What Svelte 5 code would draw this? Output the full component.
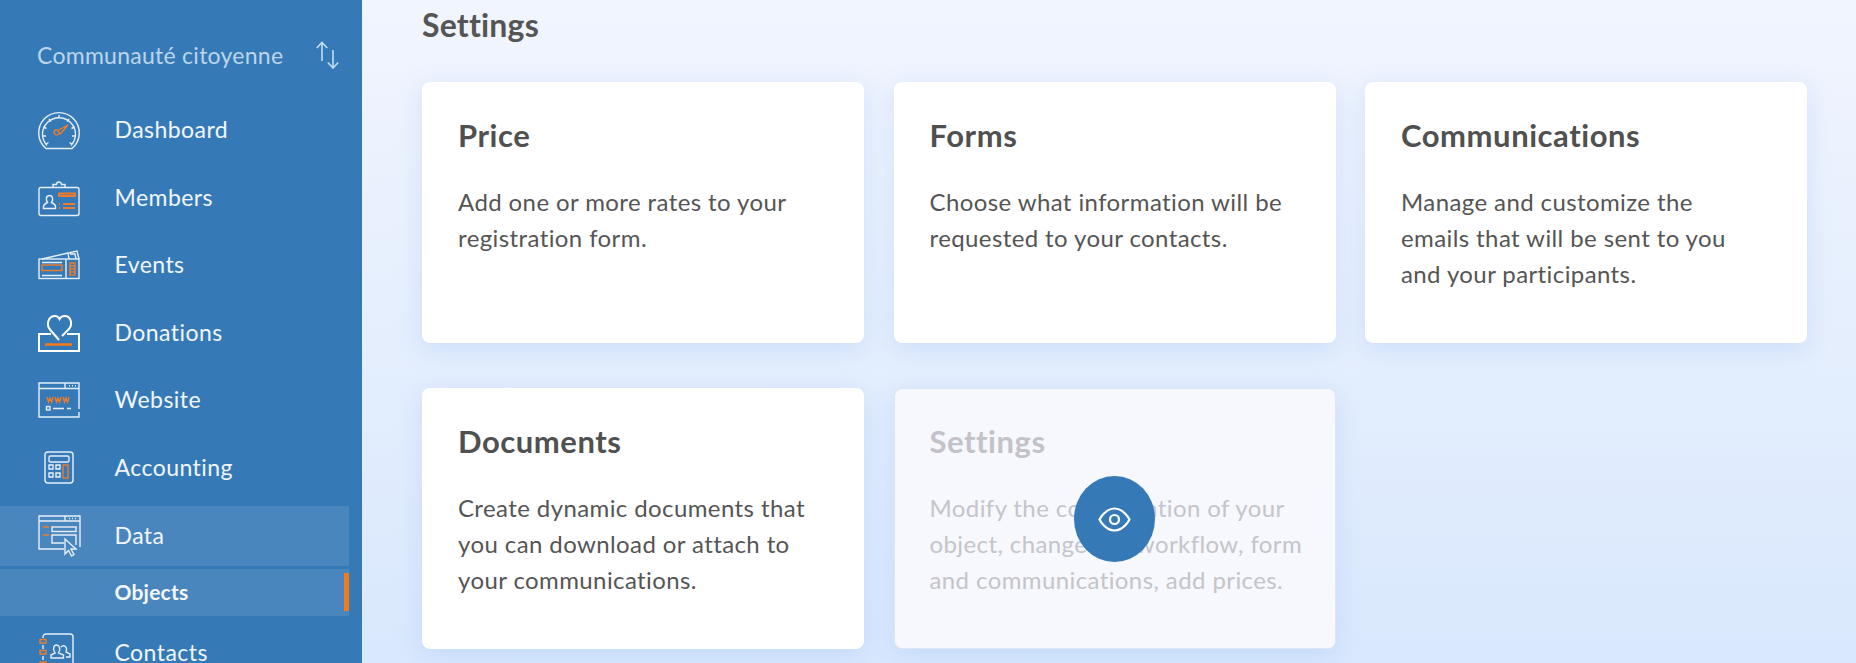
<script>
  const cards = [
    { title: 'Price', text: ['Add one or more rates to your', 'registration form.'] },
    { title: 'Forms', text: ['Choose what information will be', 'requested to your contacts.'] },
    { title: 'Communications', text: ['Manage and customize the', 'emails that will be sent to you', 'and your participants.'] },
    { title: 'Documents', text: ['Create dynamic documents that', 'you can download or attach to', 'your communications.'] },
    { title: 'Settings', text: ['Modify the configuration of your', 'object, change the workflow, form', 'and communications, add prices.'], muted: true }
  ];
</script>

<div class="page">
  <aside class="sidebar">
    <div class="org">
      <span>Communauté citoyenne</span>
      <svg class="swap" width="24" height="28" viewBox="0 0 24 28"><path d="M6 20V1.500M0.800 7 6 1.500 11.200 7M17 9v18M11.800 21.500 17 27l5.200-5.500"/></svg>
    </div>
    <nav class="menu">
      <a class="item">
        <svg class="ico" width="42" height="40" viewBox="0 0 42 40">
          <path class="w" d="M8 38.500A20.300 20.300 0 1 1 34 38.500ZM9 35.500A16.500 16.500 0 1 1 33 35.500"/>
          <path class="w" d="M21 5v3M11 9l2 2.500M31 9l-2 2.500M5.500 17l3 1.500M36.500 17l-3 1.500M4.500 26H8M37.500 26H34M8 34l2.500-1.500M34 34l-2.500-1.500"/>
          <path class="o" d="M19 21l11-6-8 9.500M21 23a2.500 2.500 0 1 1-4.500-2 2.500 2.500 0 0 1 4.500 2Z"/>
        </svg>
        <span>Dashboard</span>
      </a>
      <a class="item">
        <svg class="ico" width="42" height="36" viewBox="0 0 42 36">
          <rect class="w" x="1" y="7.500" width="40" height="28" rx="2"/>
          <path class="w" d="M15 7.500V4.500h3.500a2.500 2.500 0 0 1 5 0H27v3"/>
          <path class="w" d="M5.500 28.500v-2c0-2 2-3 4-4-2-2.500-1.500-7 2-7s4 4.500 2 7c2 1 4 2 4 4v2Z"/>
          <path class="o2" d="M21 13.500h16v2.500H21ZM21 24h1M25 24h12M21 28h1M25 28h12"/>
        </svg>
        <span>Members</span>
      </a>
      <a class="item">
        <svg class="ico" width="42" height="30" viewBox="0 0 42 30">
          <rect class="w" x="1" y="9" width="40" height="19.500"/>
          <path class="w" d="M4 9 30 3M31 9l-1-6 9-2 2 8M32 4h5l1 5M28 9v20"/>
          <path class="w" d="M4 12.500h20M4 25.500h20"/>
          <rect class="o" x="4" y="15" width="20" height="5.500"/>
          <rect class="o" x="32" y="13" width="5" height="12"/>
          <path class="o" d="M32 16h5M32 19h5M32 22h5"/>
        </svg>
        <span>Events</span>
      </a>
      <a class="item">
        <svg class="ico" width="42" height="38" viewBox="0 0 42 38">
          <path class="b" d="M13 20H1v17h40V20H29"/>
          <path class="b" d="M21 26 12 15.500C8 11 10 2 17 2c2 0 3.500 1 4.500 3 1-2 3-3 5-3 7 0 8.500 9 4 13.500L24 22"/>
          <path class="ob" d="M7 30.500h27"/>
        </svg>
        <span>Donations</span>
      </a>
      <a class="item">
        <svg class="ico" width="42" height="36" viewBox="0 0 42 36">
          <path class="w" d="M41 30v5H1V1h40v26M1 6.500h40M27 1v5.500M31 3.800h1M34 3.800h1M37 3.800h1"/>
          <path class="o" d="M9 15l1.500 5 1.500-4 1.500 4 1.500-5M17 15l1.500 5 1.500-4 1.500 4 1.500-5M25 15l1.500 5 1.500-4 1.500 4 1.500-5"/>
          <rect class="w" x="8.500" y="24.500" width="3.500" height="3.500"/>
          <path class="w" d="M15 26.500h11M29 26.500h4"/>
        </svg>
        <span>Website</span>
      </a>
      <a class="item">
        <svg class="ico" width="42" height="34" viewBox="0 0 42 34">
          <rect class="w" x="7" y="1" width="28" height="31" rx="3"/>
          <rect class="w" x="11" y="5" width="20" height="6" rx="1.500"/>
          <path class="w" d="M11 14h4v4h-4ZM18 14h4v4h-4ZM11 22h4v4h-4ZM18 22h4v4h-4Z"/>
          <rect class="o" x="25" y="14" width="5" height="13"/>
        </svg>
        <span>Accounting</span>
      </a>
      <a class="item active">
        <svg class="ico" width="42" height="42" viewBox="0 0 42 42">
          <path class="w" d="M26 34H1V1h41v31M1 6h41M27 1v5M31 3.500h1M34 3.500h1M37 3.500h1"/>
          <rect class="w" x="14" y="12" width="24" height="4.500"/>
          <path class="w" d="M26 28H14v-8h24v10"/>
          <path class="o" d="M5 12h6M5 20h6"/>
          <path class="w" d="M27 24l0 15 3.500-3.500 3 5.500 2.500-1.500-3-5.500h5Z"/>
        </svg>
        <span>Data</span>
      </a>
      <a class="item sub active"><span>Objects</span><i class="mark"></i></a>
      <a class="item">
        <svg class="ico" width="42" height="40" viewBox="0 0 42 40">
          <path class="w" d="M5 5V4a3 3 0 0 1 3-3h24a3 3 0 0 1 3 3v36M5 12v4M5 23v4"/>
          <path class="o" d="M2 6.500h6v3.500H2ZM2 17.500h6V21H2ZM2 29h6v3.500H2Z"/>
          <path class="w" d="M13 25v-3l4-2c-3-4-1-8 1.500-8s5 4 2 8l5 2v3ZM23 14c3-3 7 0 5 5l4 2v3h-4"/>
        </svg>
        <span>Contacts</span>
      </a>
    </nav>
  </aside>

  <main class="main">
    <h1>Settings</h1>
    <section class="grid">
      {#each cards as c}
        <article class="card" class:muted={c.muted}>
          <h2>{c.title}</h2>
          <p>{#each c.text as line}<span>{line}</span>{/each}</p>
          {#if c.muted}
            <div class="fab">
              <svg width="33" height="25" viewBox="0 0 33 25"><path d="M1.500 12.500S7 1.500 16.500 1.500 31.500 12.500 31.500 12.500 26 23.500 16.500 23.500 1.500 12.500 1.500 12.500Z"/><circle cx="16.500" cy="12.500" r="4.500"/></svg>
            </div>
          {/if}
        </article>
      {/each}
    </section>
  </main>
</div>

<style>
  :global(body) { margin: 0; font-family: Lato, "Noto Sans", sans-serif; }
  .page { display: flex; height: 663px; overflow: hidden; background: linear-gradient(180deg, #f1f5fe 0%, #d9e8fd 100%); }
  .sidebar { width: 362px; flex: none; background: #357ab7; overflow: hidden; }
  .org { display: flex; align-items: center; justify-content: space-between; height: 30px; padding: 40px 22px 1px 37px; color: #bcd5eb; font-size: 23px; letter-spacing: 0.270px; }
  .swap path { fill: none; stroke: #c5dcf0; stroke-width: 1.600; }
  .menu { display: flex; flex-direction: column; gap: 7.600px; width: 349px; margin-top: 29px; }
  .item { position: relative; display: flex; align-items: center; height: 60px; flex: none; padding-left: 38px; color: #f2f6fb; font-size: 23px; letter-spacing: 0.450px; }
  .ico { width: 42px; flex: none; margin-right: 35px; overflow: visible; }
  .item span { margin: -2px 0 0 -0.500px; }
  .active { background: #4a86be; }
  .sub { height: 47px; margin-top: -4.600px; padding-left: 115px; font-size: 21px; font-weight: 700; letter-spacing: 0.200px; color: #f5f8fc; }
  .mark { position: absolute; right: 0; top: 4px; width: 5px; height: 38px; background: #f47a1c; }
  .w, .o, .o2, .b, .ob { fill: none; stroke-width: 1.400; }
  .w { stroke: #e6eff8; }
  .o { stroke: #ee7d2a; }
  .o2 { stroke: #ee7d2a; stroke-width: 1.800; }
  .b { stroke: #fff; stroke-width: 2; }
  .ob { stroke: #f9781a; stroke-width: 2.500; }
  .main { flex: 1; padding: 0 49px 0 60px; color: #535353; }
  h1 { margin: 0; height: 82px; padding-top: 8px; box-sizing: border-box; font-size: 32px; line-height: 34px; font-weight: 700; color: #555; letter-spacing: 0.200px; }
  .grid { display: grid; grid-template-columns: repeat(3, 442px); grid-auto-rows: 261px; gap: 45px 29.500px; }
  .card { position: relative; box-sizing: border-box; background: #fff; border-radius: 8px; padding: 33.500px 36px 36px; box-shadow: 0 6px 24px rgba(120, 165, 235, 0.220); }
  h2 { margin: 0 0 30px; font-size: 31px; line-height: 38px; font-weight: 700; color: #505050; letter-spacing: 0.550px; }
  p { margin: 0; font-size: 24px; line-height: 36px; color: #555; letter-spacing: 0.400px; }
  p span { display: block; white-space: nowrap; }
  .muted { background: #f6f8fe; border: 1px solid #dfe6f3; padding: 32.500px 35px 35px; }
  .muted h2 { color: #c2c2c8; }
  .muted p { color: #c4c4ca; }
  .fab { position: absolute; left: 179px; top: 87px; width: 81px; height: 86px; border-radius: 50%; background: #357ab7; display: flex; align-items: center; justify-content: center; }
  .fab path, .fab circle { fill: none; stroke: #fff; stroke-width: 2.200; }
</style>
